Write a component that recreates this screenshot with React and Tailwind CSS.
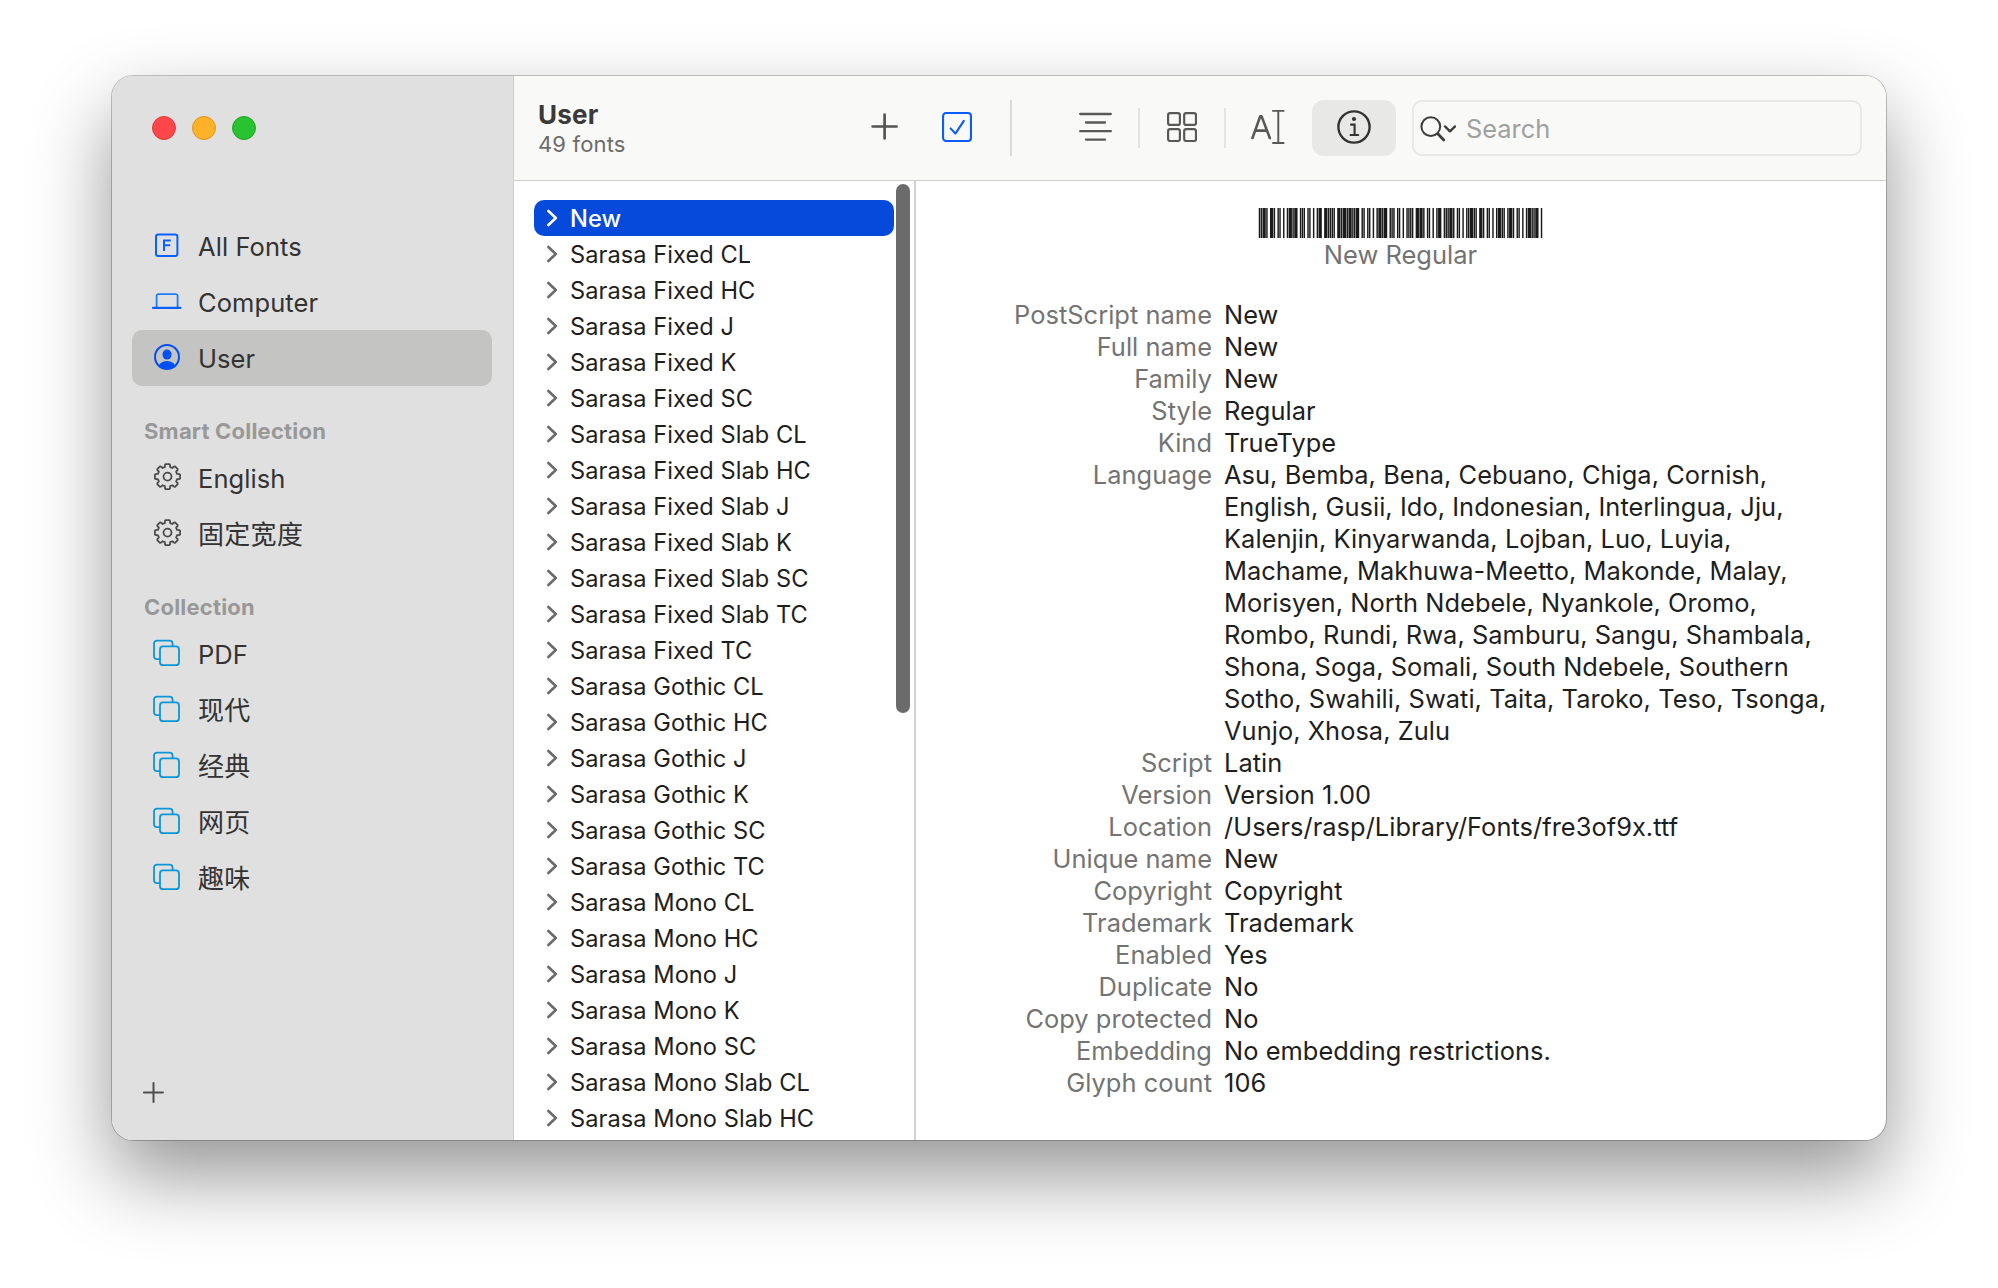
import React from "react";

const families = [
  "New", "Sarasa Fixed CL", "Sarasa Fixed HC", "Sarasa Fixed J", "Sarasa Fixed K", "Sarasa Fixed SC",
  "Sarasa Fixed Slab CL", "Sarasa Fixed Slab HC", "Sarasa Fixed Slab J", "Sarasa Fixed Slab K",
  "Sarasa Fixed Slab SC", "Sarasa Fixed Slab TC", "Sarasa Fixed TC", "Sarasa Gothic CL",
  "Sarasa Gothic HC", "Sarasa Gothic J", "Sarasa Gothic K", "Sarasa Gothic SC", "Sarasa Gothic TC",
  "Sarasa Mono CL", "Sarasa Mono HC", "Sarasa Mono J", "Sarasa Mono K", "Sarasa Mono SC",
  "Sarasa Mono Slab CL", "Sarasa Mono Slab HC",
];

const details = [
  ["PostScript name", ["New"]],
  ["Full name", ["New"]],
  ["Family", ["New"]],
  ["Style", ["Regular"]],
  ["Kind", ["TrueType"]],
  ["Language", [
    "Asu, Bemba, Bena, Cebuano, Chiga, Cornish,",
    "English, Gusii, Ido, Indonesian, Interlingua, Jju,",
    "Kalenjin, Kinyarwanda, Lojban, Luo, Luyia,",
    "Machame, Makhuwa-Meetto, Makonde, Malay,",
    "Morisyen, North Ndebele, Nyankole, Oromo,",
    "Rombo, Rundi, Rwa, Samburu, Sangu, Shambala,",
    "Shona, Soga, Somali, South Ndebele, Southern",
    "Sotho, Swahili, Swati, Taita, Taroko, Teso, Tsonga,",
    "Vunjo, Xhosa, Zulu",
  ]],
  ["Script", ["Latin"]],
  ["Version", ["Version 1.00"]],
  ["Location", ["/Users/rasp/Library/Fonts/fre3of9x.ttf"]],
  ["Unique name", ["New"]],
  ["Copyright", ["Copyright"]],
  ["Trademark", ["Trademark"]],
  ["Enabled", ["Yes"]],
  ["Duplicate", ["No"]],
  ["Copy protected", ["No"]],
  ["Embedding", ["No embedding restrictions."]],
  ["Glyph count", ["106"]],
];

// Code 39 element widths (bar, space, bar, ...): n = narrow, w = wide.
const code39 = {
  N: "nnnnwnnww", E: "wnnnwwnnn", W: "wwwnnnnnn", R: "wnnnnnwwn", G: "nnnnnwwnw",
  U: "wwnnnnnnw", L: "nnwnnnnww", A: "wnnnnwnnw", " ": "nwwnnnwnn", "+": "nwnnnwnwn",
};

function barsFor(text) {
  const encoded = text.replace(/[a-z]/g, (c) => "+" + c.toUpperCase());
  const bars = [];
  let x = 0;
  for (const ch of encoded) {
    [...code39[ch]].forEach((e, i) => {
      const w = e === "w" ? 3 : 1;
      if (i % 2 === 0) bars.push([x, w]);
      x += w;
    });
    x += 1;
  }
  return { bars, width: x - 1 };
}

const SPREAD = 0.27;

function Barcode({ text }) {
  const { bars, width } = barsFor(text);
  return (
    <svg className="block h-[30px] w-[283px] overflow-visible" viewBox={`0 0 ${width} 30`} preserveAspectRatio="none" fill="#1a1a1a">
      {bars.map(([x, w]) => <rect key={x} x={x - SPREAD} y="0" width={w + 2 * SPREAD} height="30" />)}
    </svg>
  );
}

const FontBoxIcon = () => (
  <svg className="block h-8 w-8" viewBox="0 0 32 32" fill="none" stroke="#0a60ff" strokeWidth="2">
    <rect x="4" y="4.6" width="21.4" height="21.4" rx="2.2" />
    <path d="M12 21V10.6H18.8M12 15.3H18.2" strokeWidth="2" />
  </svg>
);

const LaptopIcon = () => (
  <svg className="block h-8 w-8" viewBox="0 0 32 32" fill="none" stroke="#0a60ff">
    <path d="M4.6 21V9.9A1.8 1.8 0 0 1 6.4 8.1h17.4a1.8 1.8 0 0 1 1.8 1.8V21" stroke="#1f7bff" strokeWidth="1.8" />
    <path d="M1 21.8h27.4" strokeWidth="2.2" strokeLinecap="round" />
  </svg>
);

const UserIcon = () => (
  <svg className="block h-8 w-8" viewBox="0 0 32 32">
    <defs>
      <clipPath id="user-ring"><circle cx="15" cy="15" r="12" /></clipPath>
    </defs>
    <circle cx="15" cy="15" r="12" fill="none" stroke="#0050f5" strokeWidth="2" />
    <ellipse cx="15" cy="12.6" rx="4.5" ry="5" fill="#0050f5" />
    <ellipse cx="15" cy="26" rx="8.8" ry="7" fill="#0050f5" clipPath="url(#user-ring)" />
  </svg>
);

function gearPath() {
  const pts = [];
  const teeth = 8;
  for (let i = 0; i < teeth; i++) {
    const c = (i * 2 * Math.PI) / teeth - Math.PI / 2;
    [[-0.27, 9.9], [-0.21, 12], [-0.15, 12.7], [0.15, 12.7], [0.21, 12], [0.27, 9.9]].forEach(([da, r]) => {
      pts.push(`${(15.5 + r * Math.cos(c + da)).toFixed(2)} ${(14.6 + r * Math.sin(c + da)).toFixed(2)}`);
    });
  }
  return "M" + pts.join("L") + "Z";
}

const GearIcon = () => (
  <svg className="block h-8 w-8" viewBox="0 0 32 32" fill="none" stroke="#4a4a4a" strokeWidth="1.8" strokeLinejoin="round">
    <path d={gearPath()} />
    <circle cx="15.5" cy="14.6" r="4" />
  </svg>
);

const StackIcon = () => (
  <svg className="block h-8 w-8" viewBox="0 0 32 32" fill="none" stroke="#0a98d4" strokeWidth="1.8">
    <path d="M8 21.2H5a3 3 0 0 1-3-3V5.6a3 3 0 0 1 3-3h12.6a3 3 0 0 1 3 3v2.6" />
    <rect x="8" y="8.4" width="19" height="18.8" rx="3" />
  </svg>
);

function NavRow({ icon, label, active }) {
  const cjk = /[\u4e00-\u9fff]/.test(label);
  return (
    <div className={`flex h-14 items-center rounded-[10px] pl-5 ${active ? "bg-[#c4c4c2]" : ""}`}>
      <span className="mr-[14px]">{icon}</span>
      <span className={`mt-[2px] leading-8 text-[#333] ${cjk ? "text-[26px] tracking-[0.3px]" : "text-[25.5px] tracking-[0.08px]"}`}>
        {label}
      </span>
    </div>
  );
}

function SectionTitle({ children }) {
  return (
    <div className="flex h-16 items-end pb-[3px] pl-3 text-[22px] leading-8 font-bold tracking-[0.2px] text-[#989898]">{children}</div>
  );
}

export default function App() {
  return (
    <div
      className="flex h-[1288px] w-[1998px] overflow-hidden bg-white pt-[76px] pl-28"
      style={{ fontFamily: 'Inter, "Noto Sans CJK SC", sans-serif' }}
    >
      <div className="flex h-[1064px] w-[1774px] overflow-hidden rounded-[21px] bg-white shadow-[0_0_0_1px_rgba(0,0,0,0.22),0_36px_80px_rgba(0,0,0,0.42)]">
        <aside className="flex w-[402px] shrink-0 flex-col border-r border-[#cfcfcf] bg-[#e0e0e0] pr-[21px] pl-5">
          <div className="flex h-[142px] gap-4 pt-10 pl-5">
            <span className="size-6 rounded-full border border-[#df3a3c] bg-[#ff474a]" />
            <span className="size-6 rounded-full border border-[#dc9420] bg-[#ffb127]" />
            <span className="size-6 rounded-full border border-[#23a52a] bg-[#29c332]" />
          </div>
          <NavRow icon={<FontBoxIcon />} label="All Fonts" />
          <NavRow icon={<LaptopIcon />} label="Computer" />
          <NavRow icon={<UserIcon />} label="User" active />
          <SectionTitle>Smart Collection</SectionTitle>
          <NavRow icon={<GearIcon />} label="English" />
          <NavRow icon={<GearIcon />} label="固定宽度" />
          <SectionTitle>Collection</SectionTitle>
          {["PDF", "现代", "经典", "网页", "趣味"].map((t) => <NavRow key={t} icon={<StackIcon />} label={t} />)}
          <svg className="mt-auto mb-[37px] ml-[10px] block size-[22px]" viewBox="0 0 22 22" stroke="#4f4f4f" strokeWidth="2" strokeLinecap="round">
            <path d="M1.9 11.5H21M11.5 1.9V21" />
          </svg>
        </aside>

        <div className="flex min-w-0 flex-1 flex-col">
          <header className="flex h-[105px] shrink-0 border-b border-[#cfcfcf] bg-[#f9f9f7] pt-6 pl-6">
            <div className="w-[331px]">
              <div className="text-[26px] leading-[30px] font-bold tracking-[0.25px] text-[#3a3a3a]">User</div>
              <div className="text-[22px] leading-7 tracking-[0.15px] text-[#6c6c6c]">49 fonts</div>
            </div>
            <svg className="mt-3 block size-8" viewBox="0 0 32 32" stroke="#545454" strokeWidth="2.7" strokeLinecap="round">
              <path d="M3.6 14.5H27.6M15.6 2.5V26.5" />
            </svg>
            <svg className="mt-3 ml-[41px] block size-[30px]" viewBox="0 0 30 30" fill="none" stroke="#0a5cff" strokeWidth="2.1">
              <rect x="1.05" y="1.05" width="27.9" height="27.9" rx="3" />
              <path d="M8.6 16.4l4.8 5.2 8.4-12.8" strokeWidth="2.1" strokeLinecap="round" strokeLinejoin="round" />
            </svg>
            <div className="ml-[38px] h-14 w-[2px] bg-[#dadad9]" />
            <svg className="mt-3 ml-[66px] block h-8 w-[34px]" viewBox="0 0 34 32" stroke="#585858" strokeWidth="2.3" strokeLinecap="round">
              <path d="M2.2 2H32.8M8 10.5H27M2.2 19.2H32.8M8 27.6H27" />
            </svg>
            <div className="mt-2 ml-[26px] h-10 w-[2px] bg-[#e4e4e3]" />
            <svg className="mt-3 ml-[27px] block size-[30px]" viewBox="0 0 30 30" fill="none" stroke="#585858" strokeWidth="2.2">
              <rect x="1.1" y="1.1" width="11.8" height="11.8" rx="2" />
              <rect x="17.2" y="1.1" width="11.8" height="11.8" rx="2" />
              <rect x="1.1" y="17.2" width="11.8" height="11.8" rx="2" />
              <rect x="17.2" y="17.2" width="11.8" height="11.8" rx="2" />
            </svg>
            <div className="mt-2 ml-[27px] h-10 w-[2px] bg-[#e4e4e3]" />
            <svg className="mt-[10px] ml-[25px] block h-[34px] w-[34px]" viewBox="0 0 34 34" fill="none" stroke="#585858" strokeWidth="2.6" strokeLinecap="round" strokeLinejoin="round">
              <path d="M1.5 28L9.2 6.4h1.4L18.8 28M4.6 20.6h11.2" />
              <path d="M22 .9H32.6M22 33H32.6M27.3 1V33" strokeWidth="1.9" />
            </svg>
            <div className="ml-[27px] flex h-14 w-[84px] items-center justify-center rounded-xl bg-[#e8e8e6]">
              <svg className="mt-[-2px] block size-[34px]" viewBox="0 0 34 34" fill="none" stroke="#333" strokeWidth="2.4" strokeLinecap="round">
                <circle cx="17" cy="17" r="15.6" />
                <path d="M14 14.6h3.6V24.6M13.6 25h7.6" strokeWidth="2.1" />
                <circle cx="17" cy="9" r="2.1" fill="#333" stroke="none" />
              </svg>
            </div>
            <div className="ml-4 flex h-14 w-[450px] items-center rounded-[10px] border-2 border-[#e8e8e6] pl-[6px]">
              <svg className="block h-7 w-9" viewBox="0 0 36 28" fill="none" stroke="#3d3d3d" strokeLinecap="round" strokeLinejoin="round">
                <circle cx="10.8" cy="12.6" r="9.4" strokeWidth="2" />
                <path d="M17.8 19.8L23.8 26" strokeWidth="2.8" />
                <path d="M25 12.4l5 5 5-5" strokeWidth="2.3" />
              </svg>
              <span className="mt-[2px] ml-[10px] text-[25.4px] leading-8 text-[#a0a0a0]">Search</span>
            </div>
          </header>

          <div className="flex min-h-0 flex-1">
            <div className="flex w-[402px] shrink-0 border-r-2 border-[#d2d2d2]">
              <ul className="w-[380px] pt-[19px] pl-5">
                {families.map((name, i) => (
                  <li
                    key={name}
                    className={`flex h-9 items-center rounded-[10px] pl-[13px] ${i === 0 ? "bg-[#064adb] text-white" : "text-[#1e1e1e]"}`}
                  >
                    <svg className="mt-[-1px] block h-[18px] w-3" viewBox="0 0 12 18" fill="none" stroke={i === 0 ? "#fff" : "#6b6b6b"} strokeWidth="2.6" strokeLinecap="round" strokeLinejoin="round">
                      <path d="M1.4 2L8.8 9l-7.4 7" />
                    </svg>
                    <span className={`mt-[2px] ml-[11px] text-[23.6px] leading-8 tracking-[0.06px] whitespace-nowrap ${i === 0 ? "font-medium" : ""}`}>{name}</span>
                  </li>
                ))}
              </ul>
              <div className="mt-[3px] ml-[2px] h-[529px] w-[14px] rounded-full bg-[#6b6b6b]" />
            </div>

            <section className="flex-1 pt-[27px]">
              <div className="flex flex-col items-center pr-px">
                <Barcode text="New Regular" />
                <div className="mt-px text-[25.5px] leading-8 text-[#737373]">New Regular</div>
              </div>
              <dl className="mt-7 text-[25.4px] leading-8 tracking-[0.05px]">
                {details.map(([label, lines]) => (
                  <div key={label} className="flex">
                    <dt className="w-[296px] shrink-0 text-right text-[#737373]">{label}</dt>
                    <dd className="ml-3 whitespace-nowrap text-[#1e1e1e]">
                      {lines.map((line) => <div key={line}>{line}</div>)}
                    </dd>
                  </div>
                ))}
              </dl>
            </section>
          </div>
        </div>
      </div>
    </div>
  );
}
